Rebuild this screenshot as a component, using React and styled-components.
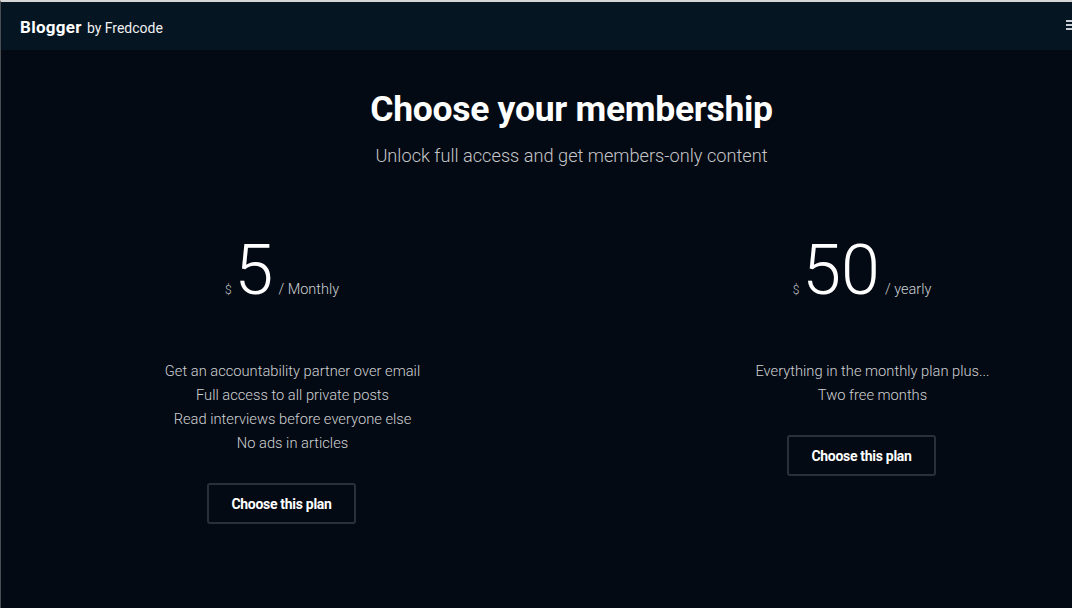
import React from "react";
import styled, { createGlobalStyle } from "styled-components";

const Global = createGlobalStyle`
  html, body { margin: 0; padding: 0; overflow: hidden; background: #040a13; }
  body { font-family: Roboto, "Noto Sans", sans-serif; color: #fff; }
  * { box-sizing: border-box; }
`;

const Frame = styled.div`
  width: 1142px;
  min-height: 608px;
  border-top: 2px solid #d6d6d6;
  border-left: 1px solid #4a4d52;
  background: #040a13;
`;

const Nav = styled.nav`
  height: 48px;
  width: 1071px;
  background: #061522;
  display: flex;
  align-items: center;
  justify-content: space-between;
  padding: 0 0 0 19px;
`;

const Brand = styled.div`
  display: flex;
  align-items: baseline;
  gap: 5px;
  margin-top: 2px;
`;

const BrandName = styled.span`
  font-weight: 700;
  font-size: 17px;
  letter-spacing: 0.3px;
`;

const BrandBy = styled.span`
  font-size: 14px;
  color: #f0f0f0;
`;

const Burger = styled.div`
  width: 16px;
  align-self: flex-start;
  margin-top: 18px;
  margin-right: -10px;
  display: flex;
  flex-direction: column;
  gap: 2px;
  span { display: block; height: 2px; background: #c9ced6; }
`;

const Main = styled.main`
  display: flex;
  flex-direction: column;
  align-items: center;
  padding-top: 37px;
`;

const Title = styled.h1`
  margin: 0;
  font-size: 35.5px;
  font-weight: 700;
  letter-spacing: -0.3px;
  line-height: 44px;
`;

const Subtitle = styled.p`
  margin: 14px 0 0;
  font-size: 18.2px;
  font-weight: 300;
  color: #c4c6c9;
  line-height: 22px;
`;

const Plans = styled.div`
  display: grid;
  grid-template-columns: 562px 562px;
  column-gap: 18px;
  width: 1142px;
  margin-top: 67px;
  align-items: start;
`;

const Plan = styled.section`
  display: flex;
  flex-direction: column;
  align-items: center;
`;

const Price = styled.div`
  display: flex;
  align-items: baseline;
  height: 72px;
  margin-left: 1px;
`;

const Currency = styled.span`
  font-size: 12px;
  color: #bfc2c6;
  margin-right: 3px;
  font-weight: 300;
`;

const Amount = styled.span`
  font-size: 70px;
  font-weight: 300;
  line-height: 72px;
`;

const Period = styled.span`
  font-size: 14.5px;
  color: #cfd1d4;
  font-weight: 300;
  margin-left: 5px;
`;

const Features = styled.ul`
  list-style: none;
  margin: 53px 0 0;
  padding: 0 0 0 22px;
  text-align: center;
`;

const Feature = styled.li`
  font-size: 14.7px;
  line-height: 24px;
  color: #cfd1d4;
  font-weight: 300;
`;

const Button = styled.button`
  margin-top: 28px;
  width: 149px;
  height: 41px;
  background: #040a13;
  border: 2px solid #2b3038;
  border-radius: 3px;
  color: #fff;
  font-family: inherit;
  font-size: 14px;
  font-weight: 700;
  letter-spacing: -0.3px;
  cursor: pointer;
`;

const plans = [
  {
    amount: "5",
    period: "/ Monthly",
    features: [
      "Get an accountability partner over email",
      "Full access to all private posts",
      "Read interviews before everyone else",
      "No ads in articles",
    ],
  },
  {
    amount: "50",
    period: "/ yearly",
    features: ["Everything in the monthly plan plus...", "Two free months"],
  },
];

export default function App() {
  return (
    <>
      <Global />
      <Frame>
        <Nav>
          <Brand>
            <BrandName>Blogger</BrandName>
            <BrandBy>by Fredcode</BrandBy>
          </Brand>
          <Burger>
            <span />
            <span />
            <span />
          </Burger>
        </Nav>
        <Main>
          <Title>Choose your membership</Title>
          <Subtitle>Unlock full access and get members-only content</Subtitle>
          <Plans>
            {plans.map((p) => (
              <Plan key={p.amount}>
                <Price>
                  <Currency>$</Currency>
                  <Amount>{p.amount}</Amount>
                  <Period>{p.period}</Period>
                </Price>
                <Features>
                  {p.features.map((f) => (
                    <Feature key={f}>{f}</Feature>
                  ))}
                </Features>
                <Button>Choose this plan</Button>
              </Plan>
            ))}
          </Plans>
        </Main>
      </Frame>
    </>
  );
}
